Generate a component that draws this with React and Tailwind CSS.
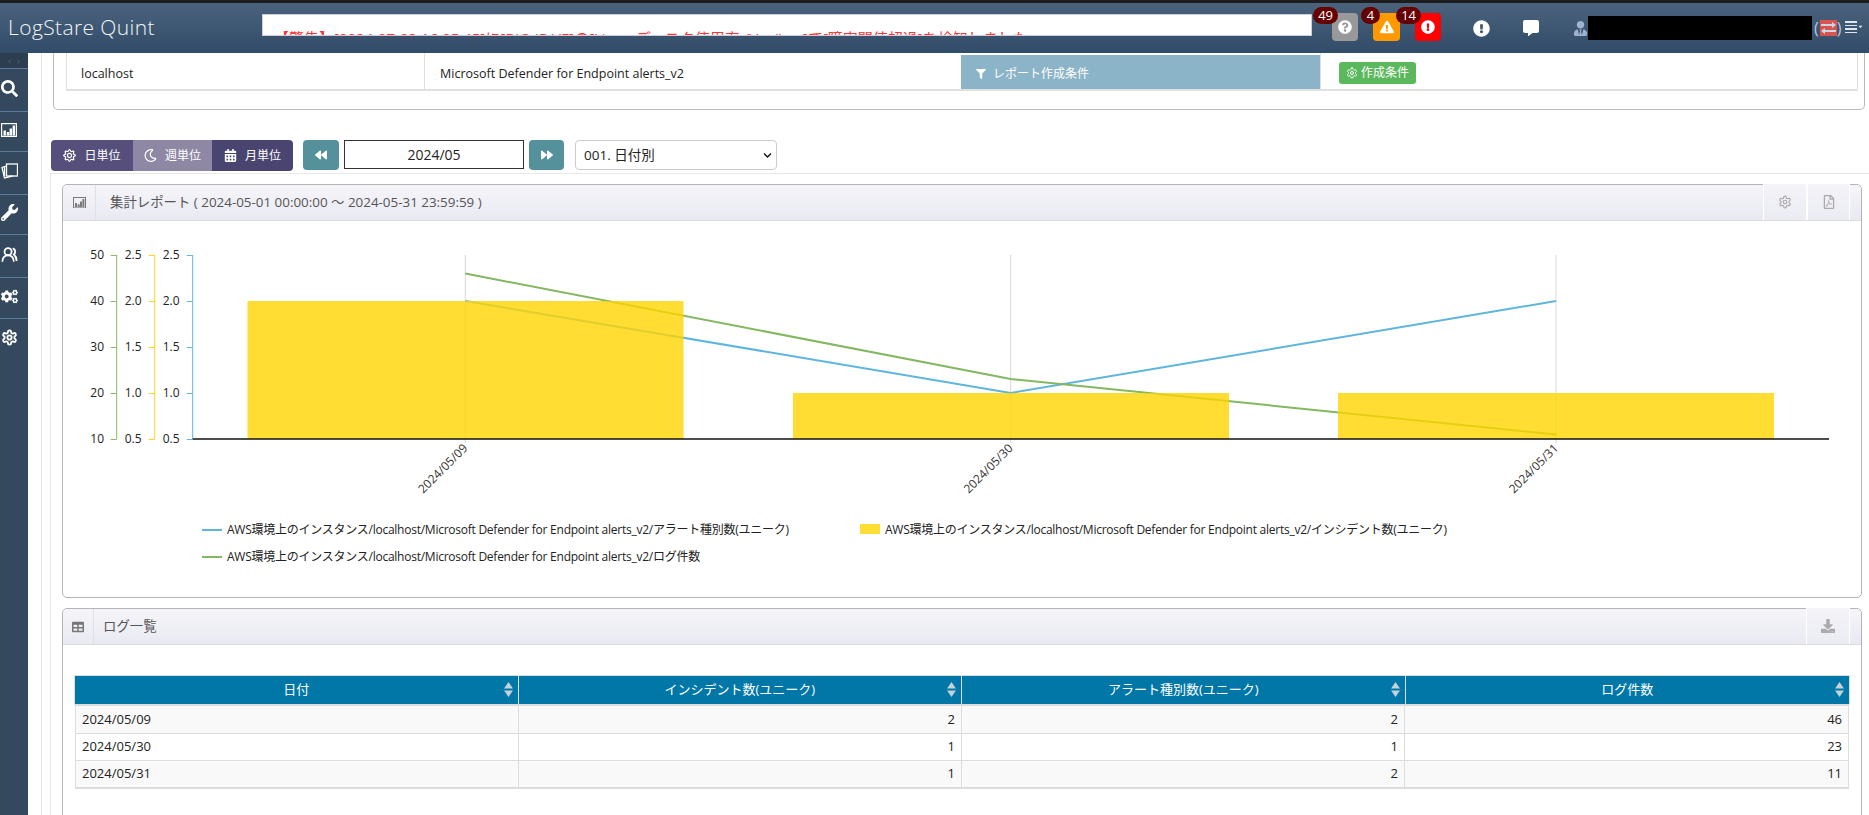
import { FaSearch, FaWrench, FaCogs, FaExclamationCircle, FaExclamationTriangle, FaQuestionCircle, FaCommentAlt, FaUserTie, FaTable, FaFilter, FaBackward, FaForward, FaCalendarAlt, FaRegMoon, FaRegFilePdf, FaDownload, FaRegSun, FaChevronDown, FaCaretDown } from 'react-icons/fa';
import { LuSettings, LuUsersRound } from 'react-icons/lu';

const font = { fontFamily: '"Open Sans", "Noto Sans CJK JP", sans-serif' };

const ChartIcon = ({ size = 16 }) => (
  <svg width={size} height={size * 0.875} viewBox="0 0 16 14" fill="currentColor">
    <path d="M0 0h16v14H0zM1.2 1.2v11.6h13.6V1.2z" fillRule="evenodd" />
    <rect x="2.5" y="7.5" width="2.4" height="5" />
    <rect x="5.8" y="9" width="2.4" height="3.5" />
    <rect x="8.6" y="5.5" width="2.4" height="7" />
    <rect x="11.6" y="2.5" width="2.4" height="10" />
  </svg>
);

const CardsIcon = () => (
  <svg width="17" height="16" viewBox="0 0 17 16" fill="none" stroke="currentColor" strokeWidth="1.3">
    <rect x="5.5" y="1" width="11" height="12" fill="#34495e" />
    <path d="M5.5 3 1 4.5 3.5 15l8-2" />
    <path d="M3.5 4v9" />
  </svg>
);

const sideItems = [
  { icon: <FaSearch />, h: 'h-[43px]' },
  { icon: <ChartIcon />, h: 'h-[40px]' },
  { icon: <CardsIcon />, h: 'h-[43px]' },
  { icon: <FaWrench />, h: 'h-[40px]' },
  { icon: <LuUsersRound strokeWidth={2.6} />, h: 'h-[43px]' },
  { icon: <FaCogs />, h: 'h-[41px]' },
  { icon: <LuSettings strokeWidth={2.6} />, h: 'h-[41px]' },
];

const rows = [
  ['2024/05/09', 2, 2, 46],
  ['2024/05/30', 1, 1, 23],
  ['2024/05/31', 1, 2, 11],
];

const Badge = ({ n, bg, icon, w }) => (
  <div className="relative">
    <div className={`${w} h-[28px] rounded-sm flex items-center justify-center text-white text-[14px] ${bg}`}>{icon}</div>
    <span className="absolute -top-[6px] right-[20px] h-[17px] px-[5px] min-w-[19px] rounded-full bg-[#660000] text-white text-[13px] leading-[17px] text-center">{n}</span>
  </div>
);

const Chart = () => {
  const x = [465.3, 1010.7, 1556];
  const ticksY = [255, 301, 347, 393, 439];
  const axes = [
    { ax: 116.7, color: '#8cbb64', labels: ['50', '40', '30', '20', '10'], end: 104 },
    { ax: 154.7, color: '#ffd21f', labels: ['2.5', '2.0', '1.5', '1.0', '0.5'], end: 141.5 },
    { ax: 192.7, color: '#62b6de', labels: ['2.5', '2.0', '1.5', '1.0', '0.5'], end: 179.5 },
  ];
  return (
    <svg width="1869" height="300" viewBox="0 221 1869 300" className="absolute left-[-63px] top-[36px] pointer-events-none" style={font}>
      {x.map((v) => (
        <line key={v} x1={v} x2={v} y1="255" y2="443" stroke="#d8d8d8" />
      ))}
      <polyline points={`${x[0]},301 ${x[1]},393 ${x[2]},301`} fill="none" stroke="#5fb5dc" strokeWidth="2" />
      <polyline points={`${x[0]},273.5 ${x[1]},379 ${x[2]},434.5`} fill="none" stroke="#84b761" strokeWidth="2" />
      <rect x="247.5" y="301" width="436" height="138" fill="#ffd500" fillOpacity=".8" />
      <rect x="793" y="393" width="436" height="46" fill="#ffd500" fillOpacity=".8" />
      <rect x="1338" y="393" width="436" height="46" fill="#ffd500" fillOpacity=".8" />
      {axes.map((a) => (
        <g key={a.ax}>
          <line x1={a.ax} x2={a.ax} y1="255" y2="439" stroke={a.color} />
          {ticksY.map((t, i) => (
            <g key={t}>
              <line x1={a.ax - 6} x2={a.ax} y1={t + 0.5} y2={t + 0.5} stroke={a.color} />
              <text x={a.end} y={t + 4} textAnchor="end" fontSize="12" fill="#222">{a.labels[i]}</text>
            </g>
          ))}
        </g>
      ))}
      <line x1="192.7" x2="1829" y1="439" y2="439" stroke="#111" strokeWidth="1.4" />
      {x.map((v, i) => (
        <text key={v} x={v + 3} y="449" textAnchor="end" fontSize="12" fill="#333" transform={`rotate(-45 ${v + 3} 449)`}>
          {rows[i][0]}
        </text>
      ))}
    </svg>
  );
};

const Legend = ({ children, className }) => (
  <span className={`absolute text-[12px] leading-[14px] tracking-[-0.25px] whitespace-nowrap text-[#222] ${className}`}>{children}</span>
);

const PanelBar = ({ icon, title, titleClass, iconW, tools }) => (
  <div className="h-[36px] flex bg-gradient-to-b from-[#f5f5f9] to-[#e9e9f2] border-b border-[#dcdce2] text-[#666] rounded-t-[5px]">
    <div className={`${iconW} flex items-center justify-center border-r border-[#e0e0e6] text-[12px] text-[#777]`}>{icon}</div>
    <div className={`flex-1 flex items-center text-[13.4px] text-[#555] ${titleClass}`}>{title}</div>
    <div className="flex pr-[11px]">{tools}</div>
  </div>
);

const Tool = ({ w, children }) => (
  <div className={`${w} h-[36px] -mt-px flex items-center justify-center border-x border-white text-[14px] text-[#aaa] bg-gradient-to-b from-[#f3f3f8] to-[#ebebf3]`}>{children}</div>
);

const SortIcon = () => (
  <svg width="9" height="15" viewBox="0 0 9 15" fill="#c3d2da" className="absolute right-[5px] top-[6px]">
    <path d="M4.5 0 9 6.5H0z" />
    <path d="M0 8.5h9L4.5 15z" />
  </svg>
);

export default function App() {
  return (
    <div className="relative w-[1869px] h-[815px] overflow-hidden bg-white text-[#222]" style={font}>
      <div className="h-[3px] bg-[#1d1d1d]" />
      {/* Header */}
      <div className="h-[50px] flex items-center bg-gradient-to-b from-[#4a627c] to-[#314c69] relative">
        <div className="w-[262px] pl-[8px] text-[#f2f6fa] text-[21px] font-light tracking-[0.4px]">LogStare Quint</div>
        <div className="w-[1050px] h-[22px] -mt-[6px] bg-white border border-[#ccd] overflow-hidden pl-[11px] pt-[15px] text-[15px] leading-[17px] text-[#f33] whitespace-nowrap">
          【警告】[2024-07-03 16:05:45]に[BIG-IP VE]の[Linux ディスク使用率 /Var/Log]で[障害閾値超過]を検知しました
        </div>
        <div className="flex items-center gap-[15px] ml-[20px] -mt-[2px]">
          <Badge n="49" w="w-[26px]" bg="bg-[#999999]" icon={<FaQuestionCircle />} />
          <Badge n="4" w="w-[27px]" bg="bg-[#ff9900]" icon={<FaExclamationTriangle />} />
          <Badge n="14" w="w-[26px]" bg="bg-[#ff0000]" icon={<FaExclamationCircle />} />
        </div>
        <FaExclamationCircle className="ml-[32px] text-white text-[17px] shrink-0" />
        <FaCommentAlt className="ml-[33px] text-white text-[16px] shrink-0" />
        <FaUserTie className="ml-[34px] text-[#9fb2cf] text-[15px] shrink-0" />
        <div className="w-[224px] h-[24px] bg-black shrink-0" />
        <span className="ml-[2px] text-[#b9c9de] text-[16px] leading-none">(</span>
        <span className="ml-[1px] w-[17px] h-[16px] bg-[#d9534f] shrink-0">
          <svg width="17" height="16" viewBox="0 0 17 16" fill="#c9d6e6">
            <path d="M1 4h11V2l4 3-4 3V6H1z" />
            <path d="M16 10H5V8l-4 3 4 3v-2h11z" />
          </svg>
        </span>
        <span className="text-[#b9c9de] text-[16px] leading-none">)</span>
        <span className="ml-[4px] flex flex-col gap-[2px] w-[12px] shrink-0 -mt-[2px]">
          <i className="block h-[1.5px] bg-[#dfe6ee]" />
          <i className="block h-[1.5px] bg-[#dfe6ee]" />
          <i className="block h-[1.5px] bg-[#dfe6ee]" />
          <i className="block h-[1.5px] bg-[#dfe6ee]" />
        </span>
        <FaCaretDown className="text-[#dfe6ee] text-[7px] shrink-0 -mt-[4px]" />
      </div>

      <div className="absolute left-0 top-[53px] bottom-0 w-[28px] bg-[#34495e] text-white">
        <div className="h-[15px] bg-[#2c3e50] flex items-center justify-center gap-[6px] text-[9px] text-[#54677b] leading-none"><span>‹</span><span>›</span></div>
        {sideItems.map((s, i) => (
          <div key={i} className={`${s.h} flex items-center pl-[1px] pb-[4px] text-[17px] border-t border-[#5c7a99]`}>{s.icon}</div>
        ))}
      </div>

      {/* Main */}
      <div className="ml-[41px] min-h-[762px] border-l border-[#e6e6e6] pl-[10px] relative">
        <div className="rounded-b-[5px] border border-t-0 border-[#bbb] h-[57px] ml-[1px] mr-[4px] pl-[12px]">
          <div className="flex h-[38px] w-[1792px] border border-t-0 border-b-2 border-[#e0e0e0] text-[12.5px]">
            <div className="w-[358px] flex items-center pl-[14px] pt-[6px] border-r border-[#e0e0e0]">localhost</div>
            <div className="w-[536px] flex items-center pl-[15px] pt-[6px]">Microsoft Defender for Endpoint alerts_v2</div>
            <div className="w-[359px] flex items-center pl-[15px] gap-[7px] bg-[#8cb4c8] text-white mt-[2px] text-[12px] pt-[4px]"><FaFilter className="text-[10px]" />レポート作成条件</div>
            <div className="flex-1 flex items-center pl-[18px] pt-[3px] border-l border-[#e0e0e0]">
              <span className="h-[22px] w-[77px] rounded-[3px] bg-[#5cb85c] text-white flex items-center justify-center gap-[3px] text-[12px]"><LuSettings className="text-[12px]" />作成条件</span>
            </div>
          </div>
        </div>

        {/* Toolbar */}
        <div className="flex items-start h-[33px] mt-[30px] -ml-px">
          <div className="flex h-[31px] w-[242px] rounded-[4px] overflow-hidden text-white text-[12px]">
            <div className="w-[82px] bg-[#564f7c] flex items-center justify-center gap-[8px]"><FaRegSun className="text-[13px]" />日単位</div>
            <div className="w-[79px] bg-[#8e88a5] flex items-center justify-center gap-[8px]"><FaRegMoon className="text-[13px]" />週単位</div>
            <div className="flex-1 bg-[#4a4570] flex items-center justify-center gap-[8px]"><FaCalendarAlt className="text-[13px]" />月単位</div>
          </div>
          <div className="ml-[10px] w-[36px] h-[30px] rounded-[4px] bg-[#54919b] text-white flex items-center justify-center text-[12px]"><FaBackward /></div>
          <div className="ml-[5px] w-[180px] h-[29px] border border-[#333] flex items-center justify-center text-[14px]">2024/05</div>
          <div className="ml-[5px] w-[35px] h-[30px] rounded-[4px] bg-[#54919b] text-white flex items-center justify-center text-[12px]"><FaForward /></div>
          <div className="relative ml-[11px] w-[202px] h-[30px]">
            <select className="appearance-none w-full h-full rounded-[4px] border border-[#ccc] bg-white text-[13.5px] pl-[8px]" defaultValue="a">
              <option value="a">001. 日付別</option>
            </select>
            <FaChevronDown className="absolute right-[5px] top-[11px] text-[9px] text-[#111]" />
          </div>
        </div>

        {/* Content */}
        <div className="border-t border-l border-[#e8e8e8] -ml-[2px] pl-[11px] pt-[10px]">
          <div className="relative w-[1800px] h-[414px] rounded-[5px] border border-[#b5b5b5] bg-white">
            <PanelBar
              icon={<ChartIcon size={13} />}
              iconW="w-[33px]"
              titleClass="pl-[14px]"
              title="集計レポート ( 2024-05-01 00:00:00 ～ 2024-05-31 23:59:59 )"
              tools={<>
                <Tool w="w-[44px]"><LuSettings /></Tool>
                <Tool w="w-[43px]"><FaRegFilePdf /></Tool>
              </>}
            />
            <Chart />
            <Legend className="left-[164px] top-[338px]"><i className="absolute -left-[25px] top-[6px] w-[20px] h-[2px] bg-[#5fb5dc]" />AWS環境上のインスタンス/localhost/Microsoft Defender for Endpoint alerts_v2/アラート種別数(ユニーク)</Legend>
            <Legend className="left-[822px] top-[338px]"><i className="absolute -left-[25px] top-[1px] w-[20px] h-[10px] bg-[#ffdd33]" />AWS環境上のインスタンス/localhost/Microsoft Defender for Endpoint alerts_v2/インシデント数(ユニーク)</Legend>
            <Legend className="left-[164px] top-[365px]"><i className="absolute -left-[25px] top-[6px] w-[20px] h-[2px] bg-[#84b761]" />AWS環境上のインスタンス/localhost/Microsoft Defender for Endpoint alerts_v2/ログ件数</Legend>
          </div>

          <div className="mt-[10px] w-[1800px] h-[220px] rounded-t-[5px] border border-[#b5b5b5] bg-white">
            <PanelBar
              icon={<FaTable />}
              iconW="w-[31px]"
              titleClass="pl-[9px]"
              title="ログ一覧"
              tools={<Tool w="w-[44px]"><FaDownload /></Tool>}
            />
            <div className="ml-[12px] mt-[31px] w-[1774px]">
              <div className="grid grid-cols-4 h-[28px] bg-[#0077a6] text-white text-[13px] outline outline-1 outline-[#ddd]">
                {['日付', 'インシデント数(ユニーク)', 'アラート種別数(ユニーク)', 'ログ件数'].map((h) => (
                  <div key={h} className="relative flex items-center justify-center border-r border-[#ddd] last:border-r-0">
                    {h}
                    <SortIcon />
                  </div>
                ))}
              </div>
              <div className="border-t-2 border-b-2 border-[#dcdcdc]">
                {rows.map((r, i) => (
                  <div key={r[0]} className={`grid grid-cols-4 h-[27px] text-[13px] border-x border-[#ddd] ${i > 0 ? 'border-t' : ''} ${i % 2 === 0 ? 'bg-[#f9f9f9]' : 'bg-white'}`}>
                    <div className="flex items-center pl-[6px] border-r border-[#ddd]">{r[0]}</div>
                    <div className="flex items-center justify-end pr-[6px] border-r border-[#ddd]">{r[1]}</div>
                    <div className="flex items-center justify-end pr-[6px] border-r border-[#ddd]">{r[2]}</div>
                    <div className="flex items-center justify-end pr-[6px]">{r[3]}</div>
                  </div>
                ))}
              </div>
            </div>
          </div>
        </div>
      </div>
    </div>
  );
}
